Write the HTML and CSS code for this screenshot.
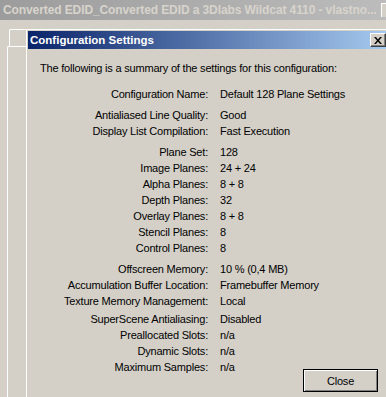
FILE: index.html
```html
<!DOCTYPE html>
<html lang="en">
<head>
    <meta charset="UTF-8">
    <title>Configuration Settings</title>
    <link rel="stylesheet" href="styles.css">
</head>
<body>
    <div class="bg-title">
        <span class="bg-title-text">Converted EDID_Converted EDID a 3Dlabs Wildcat 4110 - vlastno...</span>
        <span class="bg-title-btn"></span>
    </div>
    <div class="workspace">
        <div class="side">
            <div class="tab"></div>
            <div class="tab-body"></div>
        </div>
        <section class="dialog">
            <div class="caption">
                <h1 class="caption-text">Configuration Settings</h1>
                <button class="caption-close">
                    <svg width="8" height="7" viewBox="0 0 8 7"><path d="M0 0h2l2 2.5L6 0h2L5 3.5 8 7H6L4 4.5 2 7H0l3-3.5z" fill="#000"/></svg>
                </button>
            </div>
            <div class="dialog-body">
                <p class="intro">The following is a summary of the settings for this configuration:</p>

                <div class="row"><span class="lbl">Configuration Name:</span><span>Default 128 Plane Settings</span></div>

                <div class="row group"><span class="lbl">Antialiased Line Quality:</span><span>Good</span></div>
                <div class="row"><span class="lbl">Display List Compilation:</span><span>Fast Execution</span></div>

                <div class="row group"><span class="lbl">Plane Set:</span><span>128</span></div>
                <div class="row"><span class="lbl">Image Planes:</span><span>24 + 24</span></div>
                <div class="row"><span class="lbl">Alpha Planes:</span><span>8 + 8</span></div>
                <div class="row"><span class="lbl">Depth Planes:</span><span>32</span></div>
                <div class="row"><span class="lbl">Overlay Planes:</span><span>8 + 8</span></div>
                <div class="row"><span class="lbl">Stencil Planes:</span><span>8</span></div>
                <div class="row"><span class="lbl">Control Planes:</span><span>8</span></div>

                <div class="row group"><span class="lbl">Offscreen Memory:</span><span>10 % (0,4 MB)</span></div>
                <div class="row"><span class="lbl">Accumulation Buffer Location:</span><span>Framebuffer Memory</span></div>
                <div class="row"><span class="lbl">Texture Memory Management:</span><span>Local</span></div>
                <div class="row small-gap"><span class="lbl">SuperScene Antialiasing:</span><span>Disabled</span></div>
                <div class="row"><span class="lbl">Preallocated Slots:</span><span>n/a</span></div>
                <div class="row"><span class="lbl">Dynamic Slots:</span><span>n/a</span></div>
                <div class="row"><span class="lbl">Maximum Samples:</span><span>n/a</span></div>
            </div>
            <button class="btn-close">Close</button>
        </section>
    </div>
</body>
</html>
```

FILE: styles.css
```css
html, body {
    margin: 0;
    height: 100%;
}
body {
    display: flex;
    flex-direction: column;
    background: #d4d0c8;
    font-family: "Liberation Sans", Arial, sans-serif;
    font-size: 11px;
    letter-spacing: -0.2px;
    color: #000;
    overflow: hidden;
}
.bg-title {
    display: flex;
    align-items: center;
    height: 20px;
    flex-shrink: 0;
    background: linear-gradient(to right, #9c9c9c, #bcbcbc);
    overflow: hidden;
}
.bg-title-text {
    padding-left: 3px;
    white-space: nowrap;
    font-size: 12px;
    font-weight: 700;
    letter-spacing: -0.1px;
    color: #d8d4cc;
}
.bg-title-btn {
    flex-shrink: 0;
    margin-left: auto;
    margin-right: -11px;
    width: 16px;
    height: 14px;
    background: #d4d0c8;
    border-top: 1px solid #fff;
    border-left: 1px solid #fff;
    box-sizing: border-box;
}
.workspace {
    display: flex;
    flex: 1;
}
.side {
    display: flex;
    flex-direction: column;
    width: 26px;
    flex-shrink: 0;
}
.tab {
    margin: 9px 0 0 9px;
    height: 16px;
    border-top: 1px solid #fff;
    border-left: 1px solid #fff;
    border-top-left-radius: 2px;
}
.tab-body {
    flex: 1;
    margin-left: 7px;
    border-top: 1px solid #fff;
    border-left: 1px solid #fff;
    border-top-left-radius: 2px;
}
.dialog {
    position: relative;
    flex: 1;
    margin: 9px -2px 0 0;
    padding: 1px 0 0 1px;
    border-top: 1px solid #fff;
    border-left: 1px solid #fff;
}
.caption {
    display: flex;
    align-items: center;
    height: 18px;
    padding: 0 2px;
    background: linear-gradient(to right, #0a246a, #a6caf0);
}
.caption-text {
    flex: 1;
    margin: 0;
    font-size: 11.5px;
    font-weight: 700;
    letter-spacing: 0;
    color: #fff;
}
.caption-close {
    display: flex;
    align-items: center;
    justify-content: center;
    width: 16px;
    height: 14px;
    padding: 0;
    background: #d4d0c8;
    border: 1px solid;
    border-color: #fff #404040 #404040 #fff;
    box-shadow: inset -1px -1px 0 #808080;
}
.dialog-body {
    padding: 11px 0 0 12px;
}
.intro {
    margin: 0 0 10px;
    line-height: 16px;
}
.row {
    display: grid;
    grid-template-columns: 168px 1fr;
    column-gap: 12px;
    line-height: 16px;
}
.lbl {
    text-align: right;
}
.group {
    margin-top: 5px;
}
.small-gap {
    margin-top: 2px;
}
.btn-close {
    position: absolute;
    left: 276px;
    top: 339px;
    width: 75px;
    height: 23px;
    padding: 0;
    font-family: "Liberation Sans", Arial, sans-serif;
    font-size: 11px;
    letter-spacing: -0.2px;
    color: #000;
    background: #d4d0c8;
    border: 1px solid #000;
    box-shadow: inset 1px 1px 0 #fff, inset -1px -1px 0 #808080;
}
```
